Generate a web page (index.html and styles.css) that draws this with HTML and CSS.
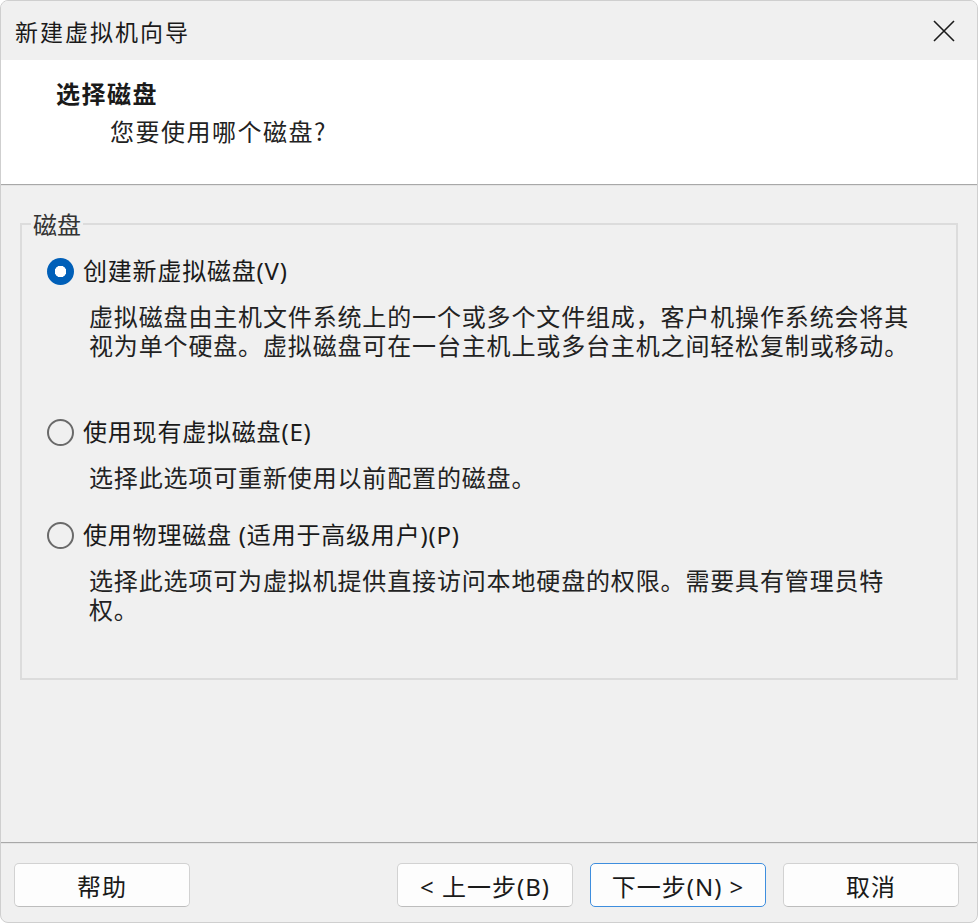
FILE: index.html
```html
<!DOCTYPE html>
<html lang="zh-CN">
<head>
<meta charset="utf-8">
<title>新建虚拟机向导</title>
<link rel="stylesheet" href="styles.css">
</head>
<body>
<div class="window">
  <div class="titlebar">
    <span class="title">新建虚拟机向导</span>
    <span class="close">
      <svg width="22" height="22" viewBox="0 0 22 22"><path d="M1 1 L21 21 M21 1 L1 21" stroke="#1b1b1b" stroke-width="1.6" fill="none"/></svg>
    </span>
  </div>
  <div class="header">
    <div class="h-title">选择磁盘</div>
    <div class="h-sub">您要使用哪个磁盘?</div>
  </div>
  <div class="content">
    <fieldset class="group">
      <legend class="legend">磁盘</legend>
      <div class="option opt1">
        <span class="radio checked"></span>
        <span class="label">创建新虚拟磁盘(V)</span>
      </div>
      <div class="desc desc1"><div>虚拟磁盘由主机文件系统上的一个或多个文件组成，客户机操作系统会将其</div><div>视为单个硬盘。虚拟磁盘可在一台主机上或多台主机之间轻松复制或移动。</div></div>
      <div class="option opt2">
        <span class="radio"></span>
        <span class="label">使用现有虚拟磁盘(E)</span>
      </div>
      <div class="desc"><div>选择此选项可重新使用以前配置的磁盘。</div></div>
      <div class="option opt3">
        <span class="radio"></span>
        <span class="label">使用物理磁盘 (适用于高级用户)(P)</span>
      </div>
      <div class="desc"><div>选择此选项可为虚拟机提供直接访问本地硬盘的权限。需要具有管理员特</div><div>权。</div></div>
    </fieldset>
  </div>
  <div class="footer">
    <button class="btn">帮助</button>
    <div class="spacer"></div>
    <button class="btn">&lt; 上一步(B)</button>
    <button class="btn default">下一步(N) &gt;</button>
    <button class="btn">取消</button>
  </div>
</div>
</body>
</html>
```

FILE: styles.css
```css
* { box-sizing: border-box; }
html, body { margin: 0; padding: 0; background: #ffffff; }
body {
  font-family: "Noto Sans", "Noto Sans CJK SC", sans-serif;
  color: #1a1a1a;
}
.window {
  width: 978px;
  height: 923px;
  border: 1px solid #cfcfcf;
  border-radius: 8px;
  background: #f0f0f0;
  overflow: hidden;
  display: flex;
  flex-direction: column;
}
.titlebar {
  height: 59px;
  flex: none;
  display: flex;
  align-items: center;
  justify-content: space-between;
  padding: 0 22px 0 14px;
  background: #f0f0f0;
}
.title {
  font-family: "Noto Sans CJK SC", sans-serif;
  font-size: 23px;
  letter-spacing: 2px;
  line-height: 30px;
  color: #1a1a1a;
}
.close { display: flex; width: 22px; height: 22px; }
.header {
  height: 125px;
  flex: none;
  background: #ffffff;
  border-bottom: 1px solid #a8a8a8;
  box-shadow: 0 1px 0 #e4e4e4;
  padding: 18px 0 0 55px;
}
.h-title {
  font-family: "Noto Sans CJK SC", sans-serif;
  font-weight: 700;
  font-size: 24px;
  letter-spacing: 1.5px;
  line-height: 30px;
}
.h-sub {
  font-family: "Noto Sans CJK SC", sans-serif;
  font-size: 24px;
  letter-spacing: 1.5px;
  line-height: 30px;
  margin: 8px 0 0 54px;
  color: #222;
}
.content {
  flex: 1;
  padding: 24px 19px 0 19px;
}
.group {
  margin: 0;
  padding: 0 0 55px 0;
  border: 2px solid #dcdcdc;
  min-width: 0;
}
.legend {
  margin-left: 9px;
  padding: 0 2px;
  font-family: "Noto Sans CJK SC", sans-serif;
  font-size: 24px;
  line-height: 30px;
  color: #333;
}
.option {
  display: flex;
  align-items: center;
  height: 30px;
  padding-left: 25px;
  margin-top: 17px;
}
.opt2 { margin-top: 58px; }
.opt3 { margin-top: 29px; }
.radio {
  width: 27px;
  height: 27px;
  border-radius: 50%;
  border: 2px solid #6a6a6a;
  flex: none;
  margin-right: 9px;
}
.radio.checked {
  border: none;
  background: radial-gradient(circle, #ffffff 0 5.5px, #005fb8 6px);
}
.label {
  font-size: 24px;
  line-height: 30px;
  letter-spacing: 0.8px;
  color: #1a1a1a;
}
.desc {
  margin: 15px 0 0 67px;
  font-family: "Noto Sans CJK SC", sans-serif;
  font-size: 24px;
  line-height: 29px;
  letter-spacing: 0.85px;
  color: #222;
  white-space: nowrap;
}
.footer {
  flex: none;
  height: 80px;
  border-top: 1px solid #a8a8a8;
  box-shadow: inset 0 1px 0 #e4e4e4;
  display: flex;
  align-items: flex-start;
  padding: 20px 18px 0 13px;
  gap: 17px;
}
.spacer { flex: 1; }
.btn {
  width: 176px;
  height: 44px;
  border: 1px solid #d2d2d2;
  border-bottom-color: #bdbdbd;
  border-radius: 5px;
  background: #fdfdfd;
  font-family: "Noto Sans", "Noto Sans CJK SC", sans-serif;
  font-size: 24px;
  letter-spacing: 1px;
  color: #1a1a1a;
  padding: 0;
}
.btn.default {
  border: 1px solid #3e8ede;
}
```
